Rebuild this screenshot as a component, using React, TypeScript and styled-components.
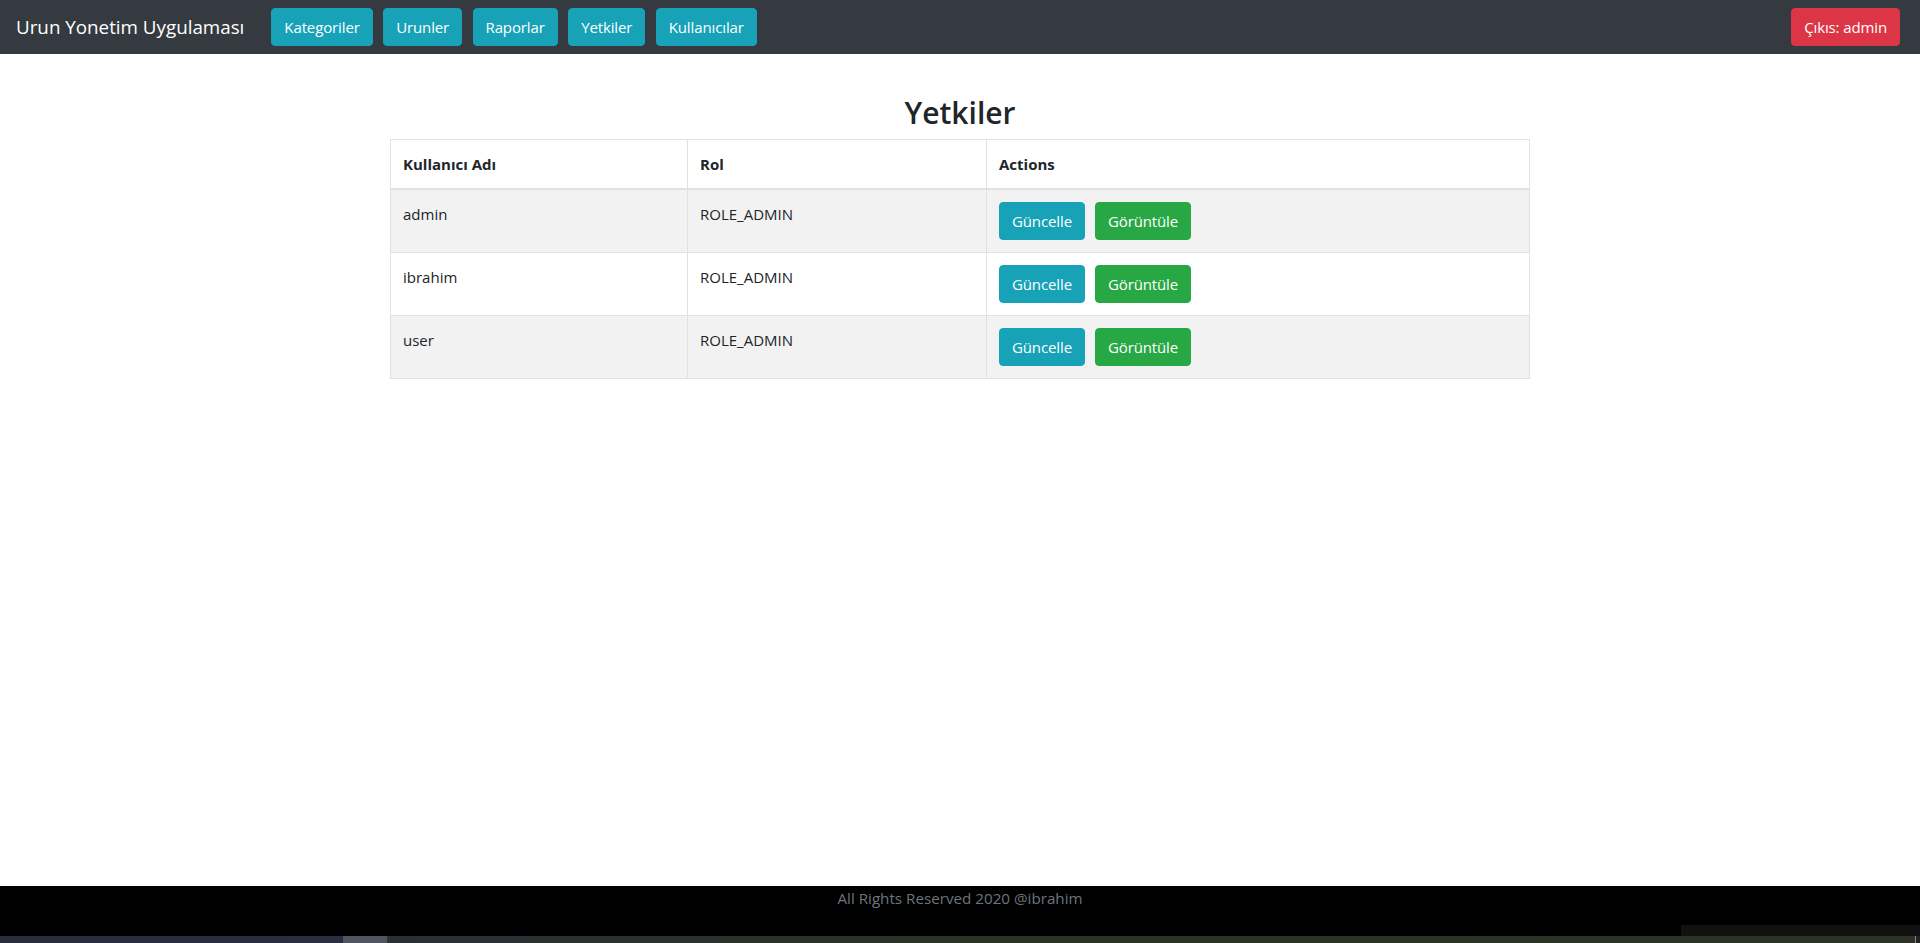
import { FC } from 'react';
import styled, { createGlobalStyle } from 'styled-components';

const GlobalStyle = createGlobalStyle`
  html, body {
    margin: 0;
    padding: 0;
    background: #fff;
  }
  body {
    font-family: 'Open Sans', 'Noto Sans', Arial, sans-serif;
    font-size: 15px;
    line-height: 24px;
    color: #212529;
  }
  * {
    box-sizing: border-box;
  }
`;

const Page = styled.div`
  display: flex;
  flex-direction: column;
  height: 943px;
  overflow: hidden;
`;

const Navbar = styled.nav`
  display: flex;
  align-items: center;
  height: 54px;
  padding: 8px 20px 8px 16px;
  background: #343a40;
`;

const Brand = styled.a`
  font-size: 18.8px;
  line-height: 30px;
  color: #fff;
  margin-right: 27px;
  white-space: nowrap;
`;

const NavButtons = styled.div`
  display: flex;
  gap: 10.4px;
  flex: 1;
`;

const variants = {
  info: '#17a2b8',
  success: '#28a745',
  danger: '#dc3545',
};

const Button = styled.button<{ $variant: keyof typeof variants }>`
  height: 38px;
  padding: 6px 12px;
  border: 1px solid ${(p) => variants[p.$variant]};
  border-radius: 4px;
  background: ${(p) => variants[p.$variant]};
  color: #fff;
  font-family: inherit;
  font-size: 15px;
  line-height: 24px;
  letter-spacing: -0.12px;
  cursor: pointer;
  white-space: nowrap;
`;

const Main = styled.main`
  flex: 1;
  width: 1140px;
  margin: 0 auto;
`;

const Title = styled.h2`
  margin: 40px 0 7px;
  font-size: 30px;
  font-weight: 600;
  line-height: 38px;
  text-align: center;
  color: #212529;
`;

const Table = styled.table`
  width: 100%;
  border-collapse: collapse;
  border: 1px solid #dee2e6;
`;

const Th = styled.th<{ $width?: number }>`
  width: ${(p) => (p.$width ? `${p.$width}px` : 'auto')};
  padding: 12px;
  text-align: left;
  font-weight: 700;
  vertical-align: bottom;
  border: 1px solid #dee2e6;
  border-bottom-width: 2px;
`;

const Row = styled.tr<{ $striped: boolean }>`
  background: ${(p) => (p.$striped ? '#f2f2f2' : '#fff')};
`;

const Td = styled.td`
  padding: 12px;
  vertical-align: top;
  border: 1px solid #dee2e6;
`;

const Actions = styled.div`
  display: flex;
  gap: 10px;
`;

const Footer = styled.footer`
  position: relative;
  height: 50px;
  background: #000;
  color: #6c757d;
  text-align: center;
  font-size: 15.2px;
  line-height: 24px;
`;

const TrayShadow = styled.div`
  position: absolute;
  right: 0;
  bottom: 0;
  width: 239px;
  height: 11px;
  background: #111;
`;

const Strip = styled.div`
  display: flex;
  height: 7px;
`;

const StripPart = styled.div<{ $width?: number; $bg: string }>`
  flex: ${(p) => (p.$width ? `0 0 ${p.$width}px` : '1')};
  background: ${(p) => p.$bg};
`;

const navLinks = ['Kategoriler', 'Urunler', 'Raporlar', 'Yetkiler', 'Kullanıcılar'];

const rows = [
  { username: 'admin', role: 'ROLE_ADMIN' },
  { username: 'ibrahim', role: 'ROLE_ADMIN' },
  { username: 'user', role: 'ROLE_ADMIN' },
];

const App: FC = () => (
  <Page>
    <GlobalStyle />
    <Navbar>
      <Brand>Urun Yonetim Uygulaması</Brand>
      <NavButtons>
        {navLinks.map((l) => (
          <Button key={l} $variant="info">
            {l}
          </Button>
        ))}
      </NavButtons>
      <Button $variant="danger">Çıkıs: admin</Button>
    </Navbar>

    <Main>
      <Title>Yetkiler</Title>
      <Table>
        <thead>
          <tr>
            <Th $width={297}>Kullanıcı Adı</Th>
            <Th $width={299}>Rol</Th>
            <Th>Actions</Th>
          </tr>
        </thead>
        <tbody>
          {rows.map((r, i) => (
            <Row key={r.username} $striped={i % 2 === 0}>
              <Td>{r.username}</Td>
              <Td>{r.role}</Td>
              <Td>
                <Actions>
                  <Button $variant="info">Güncelle</Button>
                  <Button $variant="success">Görüntüle</Button>
                </Actions>
              </Td>
            </Row>
          ))}
        </tbody>
      </Table>
    </Main>

    <Footer>
      All Rights Reserved 2020 @ibrahim
      <TrayShadow />
    </Footer>
    <Strip>
      <StripPart $width={343} $bg="linear-gradient(90deg, #2a2b3b, #2b2d40)" />
      <StripPart $width={44} $bg="#50545f" />
      <StripPart $width={3} $bg="#303238" />
      <StripPart $bg="linear-gradient(90deg, #2b2f35 0%, #2c3324 40%, #2d3226 100%)" />
      <StripPart $width={1} $bg="#8a8a8a" />
      <StripPart $width={4} $bg="#222" />
    </Strip>
  </Page>
);

export default App;
